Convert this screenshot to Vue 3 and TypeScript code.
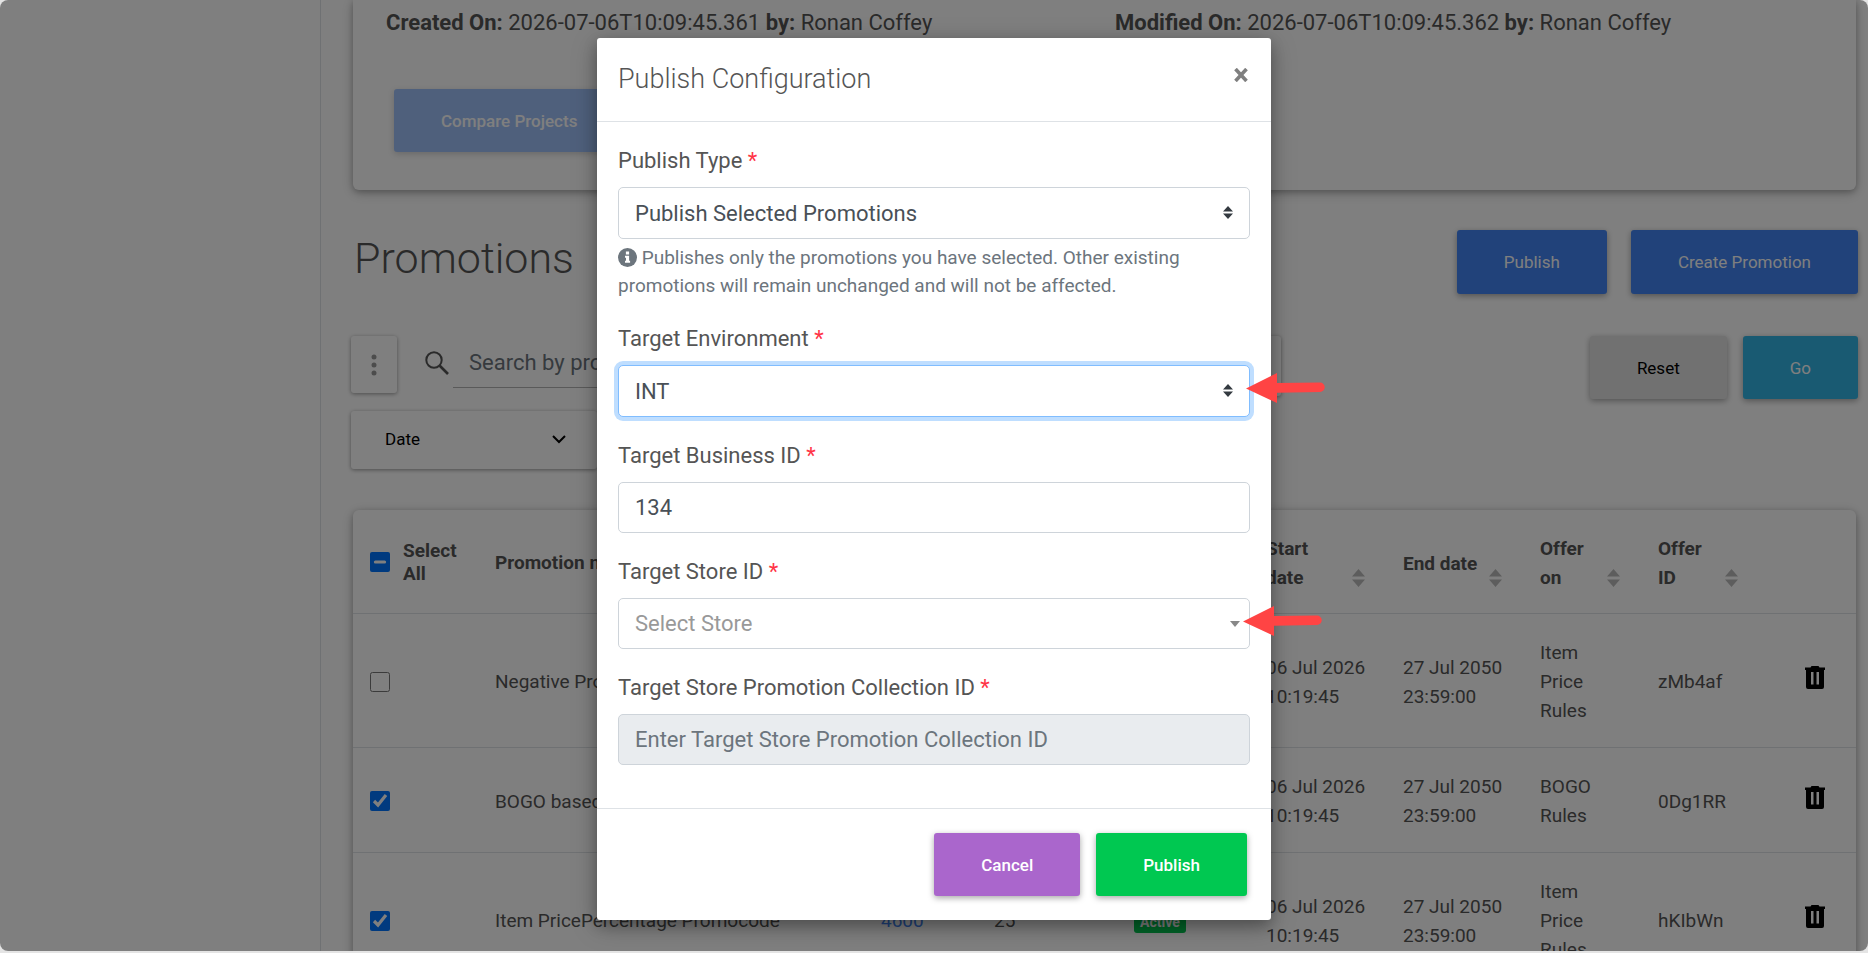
<script setup lang="ts">
import { ref } from 'vue'

interface Promotion {
  id: string
  name: string
  selected: boolean
  priority?: string
  count?: string
  status?: string
  start: string
  end: string
  rules: string
}

const promotions = ref<Promotion[]>([
  { id: 'zMb4af', name: 'Negative Promotion', selected: false, start: '06 Jul 2026\n10:19:45', end: '27 Jul 2050\n23:59:00', rules: 'Item\nPrice\nRules' },
  { id: '0Dg1RR', name: 'BOGO based', selected: true, start: '06 Jul 2026\n10:19:45', end: '27 Jul 2050\n23:59:00', rules: 'BOGO\nRules' },
  { id: 'hKIbWn', name: 'Item PricePercentage Promocode', selected: true, priority: '4600', count: '25', status: 'Active', start: '06 Jul 2026\n10:19:45', end: '27 Jul 2050\n23:59:00', rules: 'Item\nPrice\nRules' },
])

const sortable: string[] = ['Start date', 'End date', 'Offer on', 'Offer ID']

const publishType = ref('selected')
const environment = ref('INT')
const businessId = ref('134')
const store = ref('')
</script>

<template>
  <div class="screen">
    <div class="page">
      <aside class="sidebar"></aside>
      <main class="main">
        <section class="card project">
          <div class="meta">
            <div><strong>Created On:</strong> 2026-07-06T10:09:45.361 <strong>by:</strong> Ronan Coffey</div>
            <div><strong>Modified On:</strong> 2026-07-06T10:09:45.362 <strong>by:</strong> Ronan Coffey</div>
          </div>
          <button type="button" class="btn blue compare" disabled>Compare Projects</button>
        </section>

        <header class="heading">
          <h1>Promotions</h1>
          <div class="actions">
            <button type="button" class="btn blue">Publish</button>
            <button type="button" class="btn blue">Create Promotion</button>
          </div>
        </header>

        <section class="filters">
          <div class="filter-left">
            <div class="search-row">
              <button type="button" class="tile kebab" aria-label="More">
                <svg width="6" height="22" viewBox="0 0 6 22" fill="#999">
                  <circle cx="3" cy="3" r="2.5" /><circle cx="3" cy="11" r="2.5" /><circle cx="3" cy="19" r="2.5" />
                </svg>
              </button>
              <svg class="search-icon" width="24" height="24" viewBox="0 0 24 24" fill="none" stroke="#555" stroke-width="2">
                <circle cx="9" cy="9" r="7.7" /><path d="M14.5 14.5L23 23" stroke-width="2.6" />
              </svg>
              <input class="search" type="search" placeholder="Search by promotion" aria-label="Search by promotion" />
              <div class="tile tail"></div>
            </div>
            <button type="button" class="tile date">
              Date
              <svg width="14" height="9" viewBox="0 0 14 9" fill="none" stroke="#000" stroke-width="2"><path d="M1 1l6 6 6-6" /></svg>
            </button>
          </div>
          <div class="filter-actions">
            <button type="button" class="btn grey">Reset</button>
            <button type="button" class="btn cyan">Go</button>
          </div>
        </section>

        <section class="card list">
          <table>
            <colgroup>
              <col class="c-check" /><col /><col class="c-priority" /><col class="c-count" /><col class="c-status" />
              <col class="c-date" /><col class="c-date" /><col class="c-offer" /><col class="c-offer" /><col class="c-del" />
            </colgroup>
            <thead>
              <tr>
                <th>
                  <label class="all"><input type="checkbox" :indeterminate.prop="true" /><span>Select All</span></label>
                </th>
                <th>Promotion name</th>
                <th></th>
                <th></th>
                <th></th>
                <th v-for="title in sortable" :key="title" class="sortable">
                  {{ title }}
                  <svg class="sort" width="13" height="18" viewBox="0 0 13 18" fill="#bbb"><path d="M6.500 0L13 7.500H0zM0 10.500h13L6.500 18z" /></svg>
                </th>
                <th></th>
              </tr>
            </thead>
            <tbody>
              <tr v-for="p in promotions" :key="p.id">
                <td><input v-model="p.selected" type="checkbox" :aria-label="p.name" /></td>
                <td class="name">{{ p.name }}</td>
                <td><a v-if="p.priority" href="#">{{ p.priority }}</a></td>
                <td>{{ p.count }}</td>
                <td><span v-if="p.status" class="badge">{{ p.status }}</span></td>
                <td>{{ p.start }}</td>
                <td>{{ p.end }}</td>
                <td>{{ p.rules }}</td>
                <td>{{ p.id }}</td>
                <td class="del">
                  <button type="button" class="trash" aria-label="Delete">
                    <svg width="20" height="23" viewBox="0 0 20 23">
                      <path fill-rule="evenodd" d="M0 1.500h5.500L6.500 0h7l1 1.500H20V4H0zM1 4h18v17a2 2 0 0 1-2 2H3a2 2 0 0 1-2-2zM6 6v12.500h2.500V6zM11.500 6v12.500H14V6z" />
                    </svg>
                  </button>
                </td>
              </tr>
            </tbody>
          </table>
        </section>
      </main>
    </div>

    <div class="backdrop">
      <form class="modal" role="dialog" aria-labelledby="modal-title" @submit.prevent>
        <header class="modal-header">
          <h2 id="modal-title">Publish Configuration</h2>
          <button type="button" class="close" aria-label="Close">
            <svg width="14" height="14" viewBox="0 0 14 14" stroke="#7f7f7f" stroke-width="3.600"><path d="M1.500 1l11 12M12.500 1l-11 12" /></svg>
          </button>
        </header>

        <div class="modal-body">
          <div class="field">
            <label for="publish-type">Publish Type <span class="req">*</span></label>
            <div class="control">
              <select id="publish-type" v-model="publishType">
                <option value="selected">Publish Selected Promotions</option>
              </select>
              <svg class="updown" width="10" height="13" viewBox="0 0 10 13" fill="#343a40"><path d="M5 0l5 5.500H0zM0 7.500h10L5 13z" /></svg>
            </div>
            <p class="help">
              <svg width="19" height="19" viewBox="0 0 19 19">
                <circle cx="9.500" cy="9.500" r="9.500" fill="#6c757d" />
                <path fill="#fff" d="M7.900 3.600h3.200v2.800H7.900zM7 7.800h4.100v5h1v1.900H7v-1.900h1V9.700H7z" />
              </svg>
              Publishes only the promotions you have selected. Other existing promotions will remain unchanged and will not be affected.
            </p>
          </div>

          <div class="field">
            <label for="environment">Target Environment <span class="req">*</span></label>
            <div class="control">
              <select id="environment" v-model="environment" class="focused">
                <option>INT</option>
              </select>
              <svg class="updown" width="10" height="13" viewBox="0 0 10 13" fill="#343a40"><path d="M5 0l5 5.500H0zM0 7.500h10L5 13z" /></svg>
              <svg class="arrow" width="80" height="30" viewBox="0 0 80 30" fill="#ff4444">
                <path d="M0 15.500L31 0v10l43-.5a4.500 4.500 0 0 1 0 9.500l-43 .8V30z" />
              </svg>
            </div>
          </div>

          <div class="field">
            <label for="business">Target Business ID <span class="req">*</span></label>
            <input id="business" v-model="businessId" type="text" />
          </div>

          <div class="field">
            <label for="store">Target Store ID <span class="req">*</span></label>
            <div class="control">
              <select id="store" v-model="store" class="store">
                <option value="">Select Store</option>
              </select>
              <svg class="caret" width="10" height="6" viewBox="0 0 10 6" fill="#888"><path d="M0 0h10L5 6z" /></svg>
              <svg class="arrow" width="80" height="30" viewBox="0 0 80 30" fill="#ff4444">
                <path d="M-3 15.500L28 0v10l43-.5a4.500 4.500 0 0 1 0 9.500l-43 .8V30z" />
              </svg>
            </div>
          </div>

          <div class="field">
            <label for="collection">Target Store Promotion Collection ID <span class="req">*</span></label>
            <input id="collection" type="text" placeholder="Enter Target Store Promotion Collection ID" disabled />
          </div>
        </div>

        <footer class="modal-footer">
          <button type="button" class="btn purple">Cancel</button>
          <button type="submit" class="btn green">Publish</button>
        </footer>
      </form>
    </div>
  </div>
</template>

<style>
body {
  margin: 0;
  background: #e4e4e4;
}
</style>

<style scoped>
* {
  box-sizing: border-box;
}
.screen {
  position: relative;
  height: calc(100vh - 2px);
  overflow: hidden;
  border-radius: 8px;
  background: #fff;
  color: #555;
  font-family: Roboto, "Liberation Sans", sans-serif;
  font-size: 22px;
}
button,
input,
select {
  font-family: inherit;
}
.page {
  display: flex;
  height: 100%;
}
.sidebar {
  flex: 0 0 321px;
  border-right: 1px solid #dee2e6;
}
.main {
  flex: 1;
  min-width: 0;
  padding: 0 10px 0 30px;
}
.card {
  margin: 0 2px;
  background: #fff;
  border-radius: 6px;
  box-shadow: 0 2px 6px rgba(0, 0, 0, 0.25), 0 3px 14px rgba(0, 0, 0, 0.18);
}
.project {
  padding: 7px 12px 38px 33px;
  border-radius: 0 0 6px 6px;
}
.meta {
  display: grid;
  grid-template-columns: 1fr 1fr;
  line-height: 31px;
}
.btn {
  height: 63px;
  padding: 0 47px;
  border: 0;
  border-radius: 3px;
  box-shadow: 0 2px 6px rgba(0, 0, 0, 0.35);
  color: #fff;
  font-size: 17px;
  font-weight: 500;
  white-space: nowrap;
}
.blue {
  background: #4285f4;
  font-weight: 400;
}
.grey {
  background: #e2e2e2;
  color: #000;
  font-weight: 400;
}
.cyan {
  background: #33b5e5;
  font-weight: 400;
}
.purple {
  background: #aa66cc;
}
.green {
  background: #00c851;
}
.compare {
  display: block;
  margin: 51px 0 0 8px;
  font-weight: 500;
  opacity: 0.5;
}
.heading {
  display: flex;
  justify-content: space-between;
  margin-top: 40px;
}
h1 {
  margin: 0 0 0 3px;
  font-size: 43px;
  font-weight: 300;
  line-height: 56px;
}
.actions {
  display: flex;
  gap: 24px;
}
.actions .btn {
  height: 64px;
}
.filters {
  display: flex;
  justify-content: space-between;
  margin-top: 42px;
}
.filter-left {
  flex: 0 0 61.7%;
  display: flex;
  flex-direction: column;
  align-items: flex-start;
  gap: 18px;
}
.filter-actions {
  display: flex;
  align-items: flex-start;
  gap: 16px;
}
.search-row {
  display: flex;
  align-items: flex-start;
  width: 100%;
  height: 57px;
}
.tile {
  border: 0;
  border-radius: 3px;
  background: #fff;
  box-shadow: 0 1px 4px rgba(0, 0, 0, 0.4);
  color: #000;
}
.kebab {
  display: flex;
  align-items: center;
  justify-content: center;
  width: 46px;
  height: 57px;
  padding: 0;
}
.search-icon {
  flex: none;
  margin: 15px 4px 0 28px;
}
.search {
  flex: 1;
  height: 52px;
  padding: 2px 16px 0;
  border: 0;
  border-bottom: 1px solid #b4b4b4;
  background: transparent;
  font-size: 22px;
}
.search::placeholder {
  color: #6c757d;
}
.tail {
  width: 46px;
  height: 60px;
}
.date {
  display: flex;
  align-items: center;
  justify-content: space-between;
  width: 246px;
  height: 58px;
  padding: 0 31px 2px 34px;
  font-size: 17px;
}
.list {
  margin-top: 41px;
}
table {
  width: 100%;
  table-layout: fixed;
  border-collapse: separate;
  border-spacing: 0;
  font-size: 19px;
  line-height: 29px;
}
.c-check {
  width: 125px;
}
.c-priority {
  width: 113px;
}
.c-count {
  width: 140px;
}
.c-status {
  width: 132px;
}
.c-date {
  width: 137px;
}
.c-offer {
  width: 118px;
}
.c-del {
  width: 97px;
}
th {
  padding: 23px 17px 22px;
  border-bottom: 1px solid #dee2e6;
  font-weight: 700;
  text-align: left;
}
th.sortable {
  position: relative;
  padding-top: 24px;
  padding-right: 40px;
  padding-bottom: 21px;
}
.sort {
  position: absolute;
  right: 21px;
  bottom: 26px;
}
td {
  padding: 24px 17px 22px;
  border-bottom: 1px solid #dee2e6;
  white-space: pre-line;
}
td.name {
  white-space: nowrap;
}
td a {
  color: #4285f4;
  text-decoration: none;
}
.all {
  display: flex;
  align-items: center;
  gap: 13px;
  line-height: 23px;
}
input[type='checkbox'] {
  flex: none;
  display: block;
  width: 20px;
  height: 20px;
  margin: 0;
}
.badge {
  display: inline-block;
  padding: 0 6px;
  border-radius: 3px;
  background: #00c851;
  color: #fff;
  font-size: 14px;
  font-weight: 700;
  line-height: 22px;
}
td.del {
  padding-right: 31px;
  text-align: right;
}
.trash {
  padding: 0;
  border: 0;
  background: none;
}
.backdrop {
  position: absolute;
  inset: 0;
  padding-top: 38px;
  background: rgba(0, 0, 0, 0.5);
}
.modal {
  max-width: 674px;
  margin: 0 auto;
  border-radius: 3px;
  background: #fff;
  box-shadow: 0 6px 14px rgba(0, 0, 0, 0.22), 0 6px 26px rgba(0, 0, 0, 0.25);
}
.modal-header {
  display: flex;
  align-items: flex-start;
  justify-content: space-between;
  padding: 20px 21px 21px;
  border-bottom: 1px solid #dee2e6;
}
h2 {
  margin: 0;
  font-size: 27px;
  font-weight: 300;
  line-height: 42px;
}
.close {
  display: flex;
  padding: 10px 2px;
  border: 0;
  background: none;
}
.modal-body {
  padding: 24px 21px 19px;
}
.field {
  margin-bottom: 24px;
}
.field label {
  display: block;
  margin-bottom: 11px;
  line-height: 30px;
}
.req {
  color: #ff3547;
}
.control {
  position: relative;
}
.field input,
.field select {
  display: block;
  width: 100%;
  height: 51px;
  padding: 0 16px;
  border: 1px solid #ced4da;
  border-radius: 5px;
  background: #fff;
  color: #495057;
  font-size: 22px;
}
.field select {
  height: 52px;
  appearance: none;
}
.field select.store {
  height: 51px;
  color: #999;
}
.field select.focused {
  border-color: #80bdff;
  box-shadow: 0 0 0 4px #bfdeff;
}
.field input:disabled {
  background: #e9ecef;
}
.field input::placeholder {
  color: #6c757d;
}
.updown {
  position: absolute;
  top: 19px;
  right: 17px;
}
.caret {
  position: absolute;
  top: 23px;
  right: 10px;
}
.arrow {
  position: absolute;
  top: 8px;
  right: -76px;
  overflow: visible;
}
.help {
  margin: 5px 0 0;
  color: #6c757d;
  font-size: 19px;
  line-height: 28px;
}
.help svg {
  vertical-align: -3px;
}
.modal-footer {
  display: flex;
  justify-content: flex-end;
  gap: 16px;
  padding: 24px;
  border-top: 1px solid #dee2e6;
}
</style>
